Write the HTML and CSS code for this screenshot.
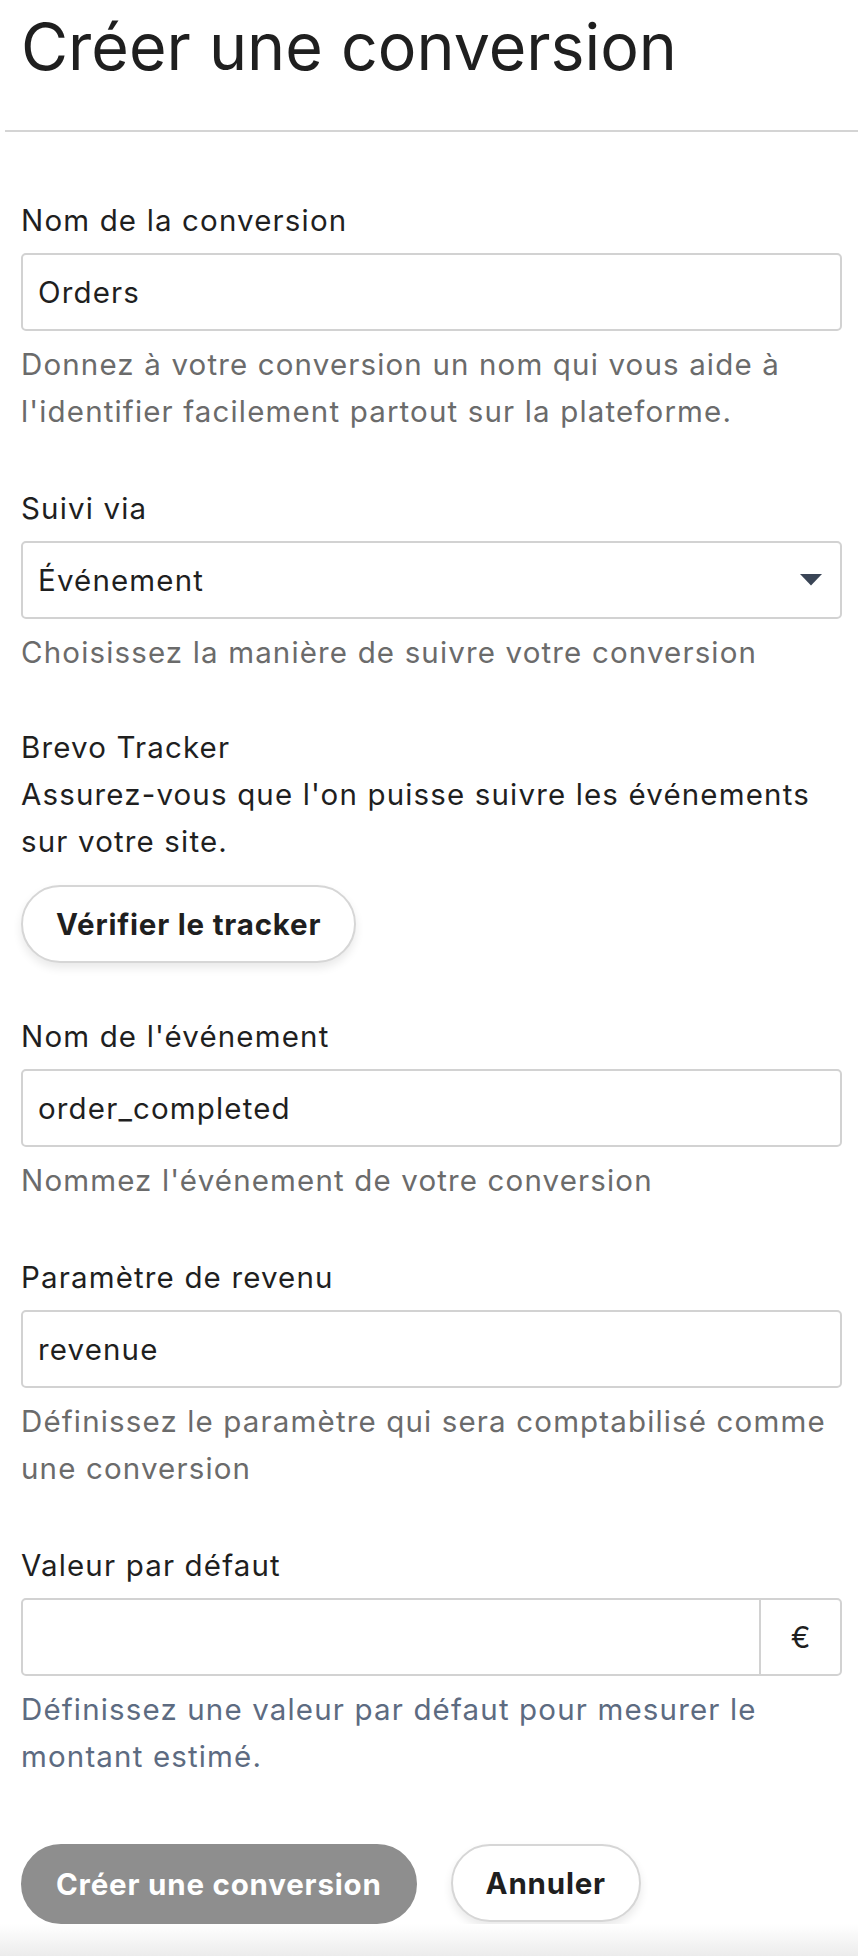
FILE: index.html
```html
<!DOCTYPE html>
<html lang="fr">
<head>
<meta charset="utf-8">
<title>Créer une conversion</title>
<link rel="stylesheet" href="styles.css">
</head>
<body>
<div class="page">
  <h1 class="title">Créer une conversion</h1>
  <hr class="divider">
  <form class="form">
    <div class="field">
      <label class="label">Nom de la conversion</label>
      <input class="input" type="text" value="Orders" readonly>
      <p class="help">Donnez à votre conversion un nom qui vous aide à l'identifier facilement partout sur la plateforme.</p>
    </div>
    <div class="field">
      <label class="label">Suivi via</label>
      <div class="select">
        <span class="select-value">Événement</span>
        <svg class="caret" width="22" height="12" viewBox="0 0 22 12"><path d="M0 0 H22 L11 11.5 Z" fill="#3a4556"/></svg>
      </div>
      <p class="help">Choisissez la manière de suivre votre conversion</p>
    </div>
    <div class="field tracker">
      <div class="tracker-title">Brevo Tracker</div>
      <p class="tracker-text">Assurez-vous que l'on puisse suivre les événements sur votre site.</p>
      <button type="button" class="btn btn-outline btn-verify">Vérifier le tracker</button>
    </div>
    <div class="field">
      <label class="label">Nom de l'événement</label>
      <input class="input" type="text" value="order_completed" readonly>
      <p class="help">Nommez l'événement de votre conversion</p>
    </div>
    <div class="field">
      <label class="label">Paramètre de revenu</label>
      <input class="input" type="text" value="revenue" readonly>
      <p class="help">Définissez le paramètre qui sera comptabilisé comme une conversion</p>
    </div>
    <div class="field">
      <label class="label">Valeur par défaut</label>
      <div class="input-group">
        <input class="input-bare" type="text" value="" readonly>
        <span class="addon">€</span>
      </div>
      <p class="help help-info">Définissez une valeur par défaut pour mesurer le montant estimé.</p>
    </div>
  </form>
  <div class="actions">
    <button type="button" class="btn btn-primary">Créer une conversion</button>
    <button type="button" class="btn btn-outline">Annuler</button>
  </div>
  <div class="fade"></div>
</div>
</body>
</html>
```

FILE: styles.css
```css
* {
  box-sizing: border-box;
}

html, body {
  margin: 0;
  padding: 0;
  background: #ffffff;
}

body {
  font-family: Inter, "Noto Sans", "Liberation Sans", sans-serif;
  color: #1f1f1f;
  font-size: 29.5px;
  letter-spacing: 1.15px;
}

.page {
  min-height: 100vh;
  display: flex;
  flex-direction: column;
}

.title {
  margin: 0;
  padding: 8px 16px 0 21px;
  font-size: 64.5px;
  line-height: 78px;
  font-weight: 400;
  letter-spacing: 0;
  color: #1f1f1f;
}

.divider {
  margin: 44px 0 0 5px;
  border: 0;
  border-top: 2px solid #d4d4d4;
  height: 0;
}

.form {
  display: flex;
  flex-direction: column;
  gap: 52px;
  padding: 67px 16px 0 21px;
}

.field {
  display: flex;
  flex-direction: column;
}

.label {
  display: block;
  font-size: 29.5px;
  line-height: 43px;
  color: #1f1f1f;
}

.input,
.select,
.input-group {
  margin-top: 11px;
  height: 78px;
  width: 100%;
  border: 2px solid #d2d2d2;
  border-radius: 5px;
  background: #fff;
}

.input {
  display: block;
  padding: 0 15px;
  font: inherit;
  font-size: 29.5px;
  letter-spacing: 1.15px;
  color: #1f1f1f;
  outline: none;
}

.select {
  display: flex;
  align-items: center;
  justify-content: space-between;
  padding: 0 18px 0 15px;
}

.select-value {
  font-size: 29.5px;
}

.caret {
  display: block;
}

.input-group {
  display: flex;
  align-items: stretch;
  overflow: hidden;
}

.input-bare {
  flex: 1;
  min-width: 0;
  border: 0;
  padding: 0 15px;
  font: inherit;
  letter-spacing: 1.15px;
  outline: none;
  background: transparent;
}

.addon {
  width: 81px;
  border-left: 2px solid #d2d2d2;
  display: flex;
  align-items: center;
  justify-content: center;
  font-size: 29.5px;
  letter-spacing: 0;
  color: #1f1f1f;
}

.help {
  margin: 10px 0 0;
  font-size: 29.5px;
  line-height: 47px;
  color: #6b6b6b;
}

.help-info {
  color: #5d6b81;
}

.tracker {
  margin-top: -4px;
}

.tracker-title,
.tracker-text {
  margin: 0;
  line-height: 47px;
  color: #1f1f1f;
}

.btn {
  font-family: Inter, "Noto Sans", "Liberation Sans", sans-serif;
  font-size: 29.5px;
  font-weight: 700;
  letter-spacing: 0.8px;
  height: 78px;
  padding: 0 33px;
  border-radius: 40px;
  border: 2px solid #d6d6d6;
  background: #fff;
  color: #1f1f1f;
  cursor: pointer;
  white-space: nowrap;
}

.btn-outline {
  box-shadow: 0 5px 10px rgba(0, 0, 0, 0.09);
}

.btn-verify {
  align-self: flex-start;
  margin-top: 20px;
}

.btn-primary {
  height: 80px;
  background: #8e8e8e;
  border-color: #8e8e8e;
  color: #ffffff;
}

.actions {
  display: flex;
  align-items: flex-start;
  gap: 34px;
  margin-top: 64px;
  padding: 0 16px 0 21px;
}

.fade {
  margin-top: auto;
  height: 32px;
  background: linear-gradient(#ffffff, #ececec);
}
```
